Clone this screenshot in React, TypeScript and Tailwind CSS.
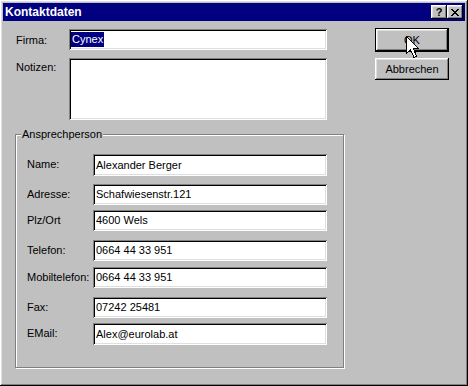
import React from "react";

// Win95 style bevels
const raised =
  "shadow-[inset_-1px_-1px_0_#000,inset_1px_1px_0_#fff,inset_-2px_-2px_0_#808080,inset_2px_2px_0_#dfdfdf]";
const sunken =
  "shadow-[inset_1px_1px_0_#808080,inset_-1px_-1px_0_#fff,inset_2px_2px_0_#000,inset_-2px_-2px_0_#dfdfdf]";

const contacts = [
  { label: "Name:", value: "Alexander Berger", row: "h-[22px]" },
  { label: "Adresse:", value: "Schafwiesenstr.121", row: "mt-[8px] h-[21px]" },
  { label: "Plz/Ort", value: "4600 Wels", row: "mt-[5px] h-[21px]" },
  { label: "Telefon:", value: "0664 44 33 951", row: "mt-[9px] h-[21px]" },
  { label: "Mobiltelefon:", value: "0664 44 33 951", row: "mt-[6px] h-[21px]" },
  { label: "Fax:", value: "07242 25481", row: "mt-[9px] h-[21px]" },
  { label: "EMail:", value: "Alex@eurolab.at", row: "mt-[5px] h-[22px]" },
];

const Field = ({ value, className }: { value: string; className: string }) => (
  <div className={`flex items-center bg-white pl-[3px] text-black ${sunken} ${className}`}>
    {value}
  </div>
);

const Cursor = () => (
  <svg
    className="absolute left-[406px] top-[36px]"
    width="14"
    height="23"
    viewBox="0 0 14 23"
    shapeRendering="crispEdges"
  >
    <polygon
      points="0.5,0.5 0.5,17.5 4.5,13.5 8,21.5 10.5,20.5 7.5,12.5 12.5,12.5"
      fill="#fff"
      stroke="#000"
      strokeWidth="1"
    />
  </svg>
);

export default function App() {
  return (
    <div
      className={`relative w-[468px] h-[386px] bg-[#c0c0c0] p-[3px] font-['Liberation_Sans',Arial,sans-serif] text-[11px] text-black ${raised}`}
    >
      {/* title bar */}
      <div className="flex h-[18px] items-center justify-between bg-[#000080] pl-[2px] pr-[2px]">
        <span className="text-[12px] font-bold leading-none text-white">Kontaktdaten</span>
        <div className="flex">
          <div className={`flex h-[14px] w-[16px] items-center justify-center bg-[#c0c0c0] text-[11px] font-bold leading-none ${raised}`}>
            ?
          </div>
          <div className={`flex h-[14px] w-[16px] items-center justify-center bg-[#c0c0c0] ${raised}`}>
            <svg width="8" height="7" viewBox="0 0 8 7" shapeRendering="crispEdges">
              <path
                d="M0 0h2v1h-2zM6 0h2v1h-2zM1 1h2v1h-2zM5 1h2v1h-2zM2 2h4v1h-4zM3 3h2v1h-2zM2 4h4v1h-4zM1 5h2v1h-2zM5 5h2v1h-2zM0 6h2v1h-2zM6 6h2v1h-2z"
                fill="#000"
              />
            </svg>
          </div>
        </div>
      </div>

      <div className="flex pl-[12px]">
        {/* left column */}
        <div className="flex w-[330px] flex-col pt-[8px]">
          <div className="flex items-start">
            <span className="ml-[1px] w-[53px] pt-[3px]">Firma:</span>
            <div className={`flex h-[21px] w-[258px] items-center bg-white pl-[2px] ${sunken}`}>
              <span className="bg-[#000080] px-[1px] leading-[15px] text-white">Cynex</span>
            </div>
          </div>
          <div className="mt-[8px] flex items-start">
            <span className="ml-[1px] w-[53px] pt-[1px]">Notizen:</span>
            <div className={`h-[62px] w-[258px] bg-white ${sunken}`} />
          </div>

          <fieldset className="mt-[8px] w-[329px] border border-[#808080] px-[5px] pt-[13px] pb-[22px] shadow-[inset_1px_1px_0_#fff,1px_1px_0_#fff]">
            <legend className="bg-[#c0c0c0] px-[1px] leading-[13px]">Ansprechperson</legend>
            {contacts.map((c) => (
              <div key={c.label} className={`flex items-start pl-[6px] ${c.row}`}>
                <span className="w-[66px] pt-[2px]">{c.label}</span>
                <Field value={c.value} className="h-full w-[234px]" />
              </div>
            ))}
          </fieldset>
        </div>

        {/* buttons */}
        <div className="ml-[30px] flex flex-col pt-[7px]">
          <div className="h-[24px] w-[74px] border border-black">
            <div className={`flex h-full w-full items-center justify-center ${raised}`}>OK</div>
          </div>
          <div className={`mt-[6px] flex h-[22px] w-[74px] items-center justify-center ${raised}`}>
            Abbrechen
          </div>
        </div>
      </div>

      <Cursor />
    </div>
  );
}
